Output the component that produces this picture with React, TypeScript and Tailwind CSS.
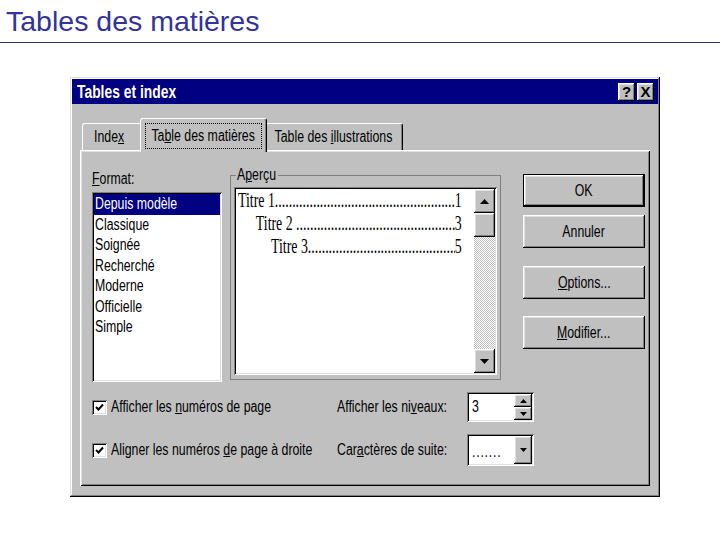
import type { ReactNode } from 'react';

const ui = "font-['Liberation_Sans',Arial,sans-serif]";
const raised = 'shadow-[inset_-1px_-1px_0_#000,inset_1px_1px_0_#fff,inset_-2px_-2px_0_#808080,inset_2px_2px_0_#dfdfdf]';
const sunken = 'shadow-[inset_1px_1px_0_#808080,inset_-1px_-1px_0_#fff,inset_2px_2px_0_#000,inset_-2px_-2px_0_#dfdfdf]';
const windowBevel = 'shadow-[inset_-1px_-1px_0_#000,inset_1px_1px_0_#dfdfdf,inset_-2px_-2px_0_#808080,inset_2px_2px_0_#fff]';

const formats = ['Depuis modèle', 'Classique', 'Soignée', 'Recherché', 'Moderne', 'Officielle', 'Simple'];

// the dialog font is a narrow sans, so text is squeezed sideways
function N({ children, c }: { children: ReactNode; c?: boolean }) {
  return (
    <span className={`inline-block whitespace-nowrap scale-x-[0.77] ${c ? 'origin-center' : 'origin-left'}`}>
      {children}
    </span>
  );
}

function Arrow({ up, size = 'sm' }: { up?: boolean; size?: 'sm' | 'lg' }) {
  const w = size === 'lg' ? 9 : 7;
  const h = size === 'lg' ? 5 : 4;
  const pts = up ? `0,${h} ${w},${h} ${w / 2},0` : `0,0 ${w},0 ${w / 2},${h}`;
  return (
    <svg width={w} height={h} viewBox={`0 0 ${w} ${h}`}>
      <polygon points={pts} fill="#000" />
    </svg>
  );
}

function Button({ children, isDefault }: { children: ReactNode; isDefault?: boolean }) {
  return (
    <div className={`h-[33px] w-[122px] ${isDefault ? 'border border-black' : ''}`}>
      <div className={`h-full w-full flex items-center justify-center ${raised}`}>
        <N c>{children}</N>
      </div>
    </div>
  );
}

function Checkbox({ children }: { children: ReactNode }) {
  return (
    <div className="flex items-center gap-[4px]">
      <div className={`w-[15px] h-[15px] shrink-0 bg-white flex items-center justify-center ${sunken}`}>
        <svg width="9" height="9" viewBox="0 0 9 9">
          <polyline points="1,4 3.5,6.5 8,1.5" fill="none" stroke="#000" strokeWidth="2" />
        </svg>
      </div>
      <N>{children}</N>
    </div>
  );
}

function PreviewLine({ title, page, indent }: { title: string; page: string; indent: string }) {
  return (
    <div className={`flex h-[23px] leading-[23px] ${indent}`}>
      <span className="whitespace-pre">{title}</span>
      <span className="flex-1 overflow-hidden whitespace-nowrap">{'.'.repeat(120)}</span>
      <span>{page}</span>
    </div>
  );
}

export default function App() {
  return (
    <div className="w-[720px] h-[540px] bg-white overflow-hidden">
      <div className="h-[43px] border-b border-[#333366] pt-[7px] pl-[6px] font-['Liberation_Sans',Arial,sans-serif] text-[28.5px] leading-none text-[#333399]">
        Tables des matières
      </div>

      <div className={`ml-[70px] mt-[34px] w-[590px] h-[420px] bg-[#c0c0c0] p-[2px] text-black text-[16px] ${windowBevel} ${ui}`}>
        {/* title bar */}
        <div className="h-[25px] bg-[#000080] flex items-center justify-between pl-[5px] pr-[4px]">
          <span className="text-white font-bold text-[18px] leading-none">
            <N>Tables et index</N>
          </span>
          <div className="flex gap-[2px]">
            <div className={`w-[17px] h-[18px] bg-[#c0c0c0] flex items-center justify-center font-bold text-[15px] leading-none ${raised}`}>?</div>
            <div className={`w-[17px] h-[18px] bg-[#c0c0c0] flex items-center justify-center font-bold text-[15px] leading-none ${raised}`}>X</div>
          </div>
        </div>

        <div className="px-[8px] pt-[14px]">
          {/* tabs */}
          <div className="h-[32px] flex items-end pl-[2px]">
            <div className="w-[60px] h-[27px] flex items-center pl-[11px] rounded-t-[3px] border-t border-l border-white">
              <N>Inde<u>x</u></N>
            </div>
            <div className="-ml-[2px] w-[127px] h-[34px] -mb-[2px] relative z-10 bg-[#c0c0c0] rounded-t-[3px] border-t border-l border-r border-white border-r-black shadow-[inset_-1px_0_0_#808080] px-[4px] pt-[4px] pb-[3px] flex">
              <span className="flex-1 min-w-0 border border-dotted border-black flex items-center justify-center">
                <N c>Ta<u>b</u>le des matières</N>
              </span>
            </div>
            <div className="-ml-[2px] w-[138px] h-[27px] flex items-center justify-center rounded-t-[3px] border-t border-r border-white border-r-black shadow-[inset_-1px_0_0_#808080]">
              <N c>Table des <u>i</u>llustrations</N>
            </div>
          </div>

          {/* panel */}
          <div className="h-[336px] shadow-[inset_1px_1px_0_#fff,inset_-1px_-1px_0_#000,inset_2px_2px_0_#dfdfdf,inset_-2px_-2px_0_#808080]">
            <div className="flex items-start pl-[12px]">
              <div className="mt-[20px] w-[130px] shrink-0">
                <div className="h-[22px] leading-[18px]">
                  <N><u>F</u>ormat:</N>
                </div>
                <div className={`h-[190px] bg-white p-[2px] ${sunken}`}>
                  {formats.map((f, i) => (
                    <div
                      key={f}
                      className={`h-[20.5px] leading-[20.5px] px-[1px] ${i === 0 ? 'bg-[#000080] text-white' : ''}`}
                    >
                      <N>{f}</N>
                    </div>
                  ))}
                </div>
              </div>

              <fieldset className="ml-[8px] mt-[16px] w-[271px] min-w-0 shrink-0 border border-[#808080] px-[3px] pb-[4px]">
                <legend className="ml-[2px] px-[1px] w-[42px] leading-[18px]">
                  <N>A<u>p</u>erçu</N>
                </legend>
                <div className={`mt-[3px] h-[188px] p-[2px] flex ${sunken}`}>
                  <div className="flex-1 min-w-0 bg-white overflow-hidden font-['Liberation_Serif','Times_New_Roman',serif] text-[21px]">
                    <div className="w-[342px] origin-top-left scale-x-[0.66] pl-[3px]">
                      <PreviewLine title="Titre 1" page="1" indent="" />
                      <PreviewLine title="Titre 2 " page="3" indent="pl-[27px]" />
                      <PreviewLine title="Titre 3" page="5" indent="pl-[50px]" />
                    </div>
                  </div>
                  <div className="w-[21px] shrink-0 flex flex-col">
                    <div className={`h-[24px] flex items-center justify-center bg-[#c0c0c0] ${raised}`}>
                      <Arrow up size="lg" />
                    </div>
                    <div className={`h-[24px] bg-[#c0c0c0] ${raised}`} />
                    <div className="flex-1 bg-[image:repeating-conic-gradient(#c0c0c0_0%_25%,#fff_0%_50%)] bg-[length:2px_2px]" />
                    <div className={`h-[24px] flex items-center justify-center bg-[#c0c0c0] ${raised}`}>
                      <Arrow size="lg" />
                    </div>
                  </div>
                </div>
              </fieldset>

              <div className="ml-[22px] mt-[24px] flex flex-col shrink-0">
                <Button isDefault>OK</Button>
                <div className="mt-[8px]">
                  <Button>Annuler</Button>
                </div>
                <div className="mt-[18px]">
                  <Button>
                    <u>O</u>ptions...
                  </Button>
                </div>
                <div className="mt-[17px]">
                  <Button>
                    <u>M</u>odifier...
                  </Button>
                </div>
              </div>
            </div>

            <div className="mt-[10px] pl-[12px] grid grid-cols-[245px_130px_67px] grid-rows-[30px_32px] gap-y-[12px] items-center">
              <Checkbox>
                Afficher les <u>n</u>uméros de page
              </Checkbox>
              <N>
                Afficher les ni<u>v</u>eaux:
              </N>
              <div className={`h-[30px] p-[2px] flex ${sunken}`}>
                <div className="flex-1 bg-white pl-[3px] flex items-center">
                  <N>3</N>
                </div>
                <div className="w-[18px] flex flex-col">
                  <div className={`flex-1 flex items-center justify-center bg-[#c0c0c0] ${raised}`}>
                    <Arrow up />
                  </div>
                  <div className={`flex-1 flex items-center justify-center bg-[#c0c0c0] ${raised}`}>
                    <Arrow />
                  </div>
                </div>
              </div>

              <Checkbox>
                Aligner les numéros <u>d</u>e page à droite
              </Checkbox>
              <N>
                Car<u>a</u>ctères de suite:
              </N>
              <div className={`h-[32px] p-[2px] flex ${sunken}`}>
                <div className="flex-1 bg-white pl-[3px] pt-[4px] flex items-center tracking-[1px]">
                  <N>.......</N>
                </div>
                <div className={`w-[18px] flex items-center justify-center bg-[#c0c0c0] ${raised}`}>
                  <Arrow />
                </div>
              </div>
            </div>
          </div>
        </div>
      </div>
    </div>
  );
}
